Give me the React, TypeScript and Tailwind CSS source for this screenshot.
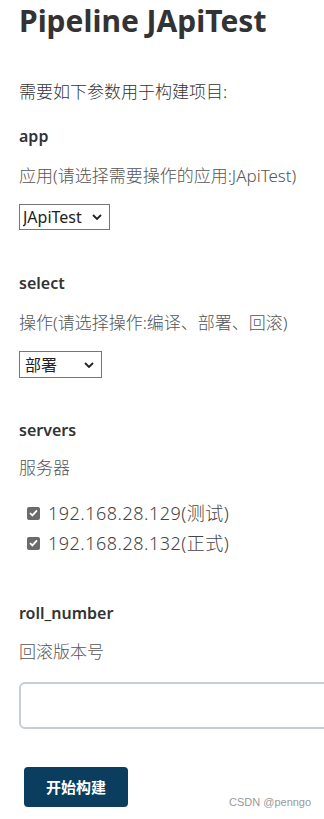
import React from 'react';

const font = { fontFamily: '"Noto Sans", "Noto Sans CJK SC", sans-serif' };

const Chevron = () => (
  <svg width="10" height="7" viewBox="0 0 10 7" className="pointer-events-none absolute top-1/2 -translate-y-1/2 right-[8px]">
    <path d="M1 1.5 L5 5.5 L9 1.5" fill="none" stroke="#222" strokeWidth="1.8" />
  </svg>
);

const Check = () => (
  <span className="flex h-[13px] w-[13px] shrink-0 items-center justify-center rounded-[2px] bg-[#6b6b6b]">
    <svg width="9" height="8" viewBox="0 0 9 8">
      <path d="M1 4.2 L3.4 6.4 L8 1.4" fill="none" stroke="#fff" strokeWidth="1.8" />
    </svg>
  </span>
);

const Param: React.FC<{ name: string; desc: string; children: React.ReactNode }> = ({ name, desc, children }) => (
  <div>
    <div className="text-[16px] leading-[24px] font-semibold text-[#333]">{name}</div>
    <div className="mt-[16px] text-[17px] leading-[24px] font-light text-[#555]">{desc}</div>
    {children}
  </div>
);

export default function App() {
  return (
    <div className="relative h-[819px] w-[324px] overflow-hidden bg-white pl-[19px] pt-[3px]" style={font}>
      <h1 className="text-[30px] leading-[36px] font-bold text-[#333]">Pipeline JApiTest</h1>
      <p className="mt-[41px] text-[17px] leading-[24px] font-light text-[#333]">需要如下参数用于构建项目:</p>

      <div className="mt-[20px]">
        <Param name="app" desc="应用(请选择需要操作的应用:JApiTest)">
          <div className="relative mt-[16px] w-[91px]">
            <select className="h-[26px] w-[91px] appearance-none border border-[#767676] bg-white pl-[3px] text-[16px] leading-[22px] text-[#222] outline-none" defaultValue="JApiTest" style={font}>
              <option>JApiTest</option>
            </select>
            <Chevron />
          </div>
        </Param>
      </div>

      <div className="mt-[41px]">
        <Param name="select" desc="操作(请选择操作:编译、部署、回滚)">
          <div className="relative mt-[16px] w-[83px]">
            <select className="h-[27px] w-[83px] appearance-none border border-[#767676] bg-white pl-[5px] text-[16px] leading-[22px] text-[#222] outline-none" defaultValue="部署" style={font}>
              <option>编译</option>
              <option>部署</option>
              <option>回滚</option>
            </select>
            <Chevron />
          </div>
        </Param>
      </div>

      <div className="mt-[40px]">
        <div className="text-[16px] leading-[24px] font-semibold text-[#333]">servers</div>
        <div className="mt-[14px] text-[17px] leading-[24px] font-light text-[#555]">服务器</div>
        <div className="mt-[21px] flex flex-col gap-[6px] pl-[8px]">
          {['192.168.28.129(测试)', '192.168.28.132(正式)'].map((s) => (
            <label key={s} className="flex items-center gap-[8px] text-[18px] leading-[24px] font-light tracking-[0.5px] text-[#444]">
              <Check />
              <span>{s}</span>
            </label>
          ))}
        </div>
      </div>

      <div className="mt-[46px]">
        <div className="text-[16px] leading-[24px] font-semibold text-[#333]">roll_number</div>
        <div className="mt-[15px] text-[17px] leading-[24px] font-light text-[#555]">回滚版本号</div>
        <input className="mt-[18px] h-[47px] w-[330px] rounded-[6px] border-2 border-[#c6ced3] bg-white px-2 outline-none" />
      </div>

      <button className="ml-[5px] mt-[38px] flex h-[40px] w-[104px] items-center justify-center rounded-[4px] bg-[#0b3d5e] text-[15px] font-bold text-white">
        开始构建
      </button>

      <span className="absolute left-[229px] top-[795px] text-[11px] leading-[14px] text-[#9a9a9a]" style={{ fontFamily: '"Liberation Sans", sans-serif' }}>
        CSDN @penngo
      </span>
    </div>
  );
}
